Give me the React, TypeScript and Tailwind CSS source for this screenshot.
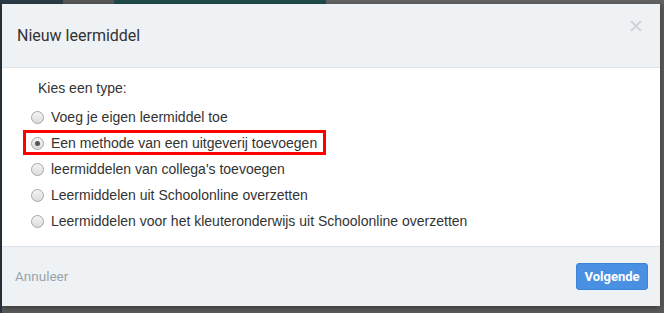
import { useState } from 'react';

const OPTIONS = [
  'Voeg je eigen leermiddel toe',
  'Een methode van een uitgeverij toevoegen',
  "leermiddelen van collega's toevoegen",
  'Leermiddelen uit Schoolonline overzetten',
  'Leermiddelen voor het kleuteronderwijs uit Schoolonline overzetten',
];

function Radio({ checked }: { checked: boolean }) {
  return (
    <span className="flex h-[13px] w-[13px] shrink-0 items-center justify-center rounded-full border border-[#a6a6a6] bg-gradient-to-b from-[#f4f4f4] to-[#dcdcdc]">
      {checked && <span className="h-[5px] w-[5px] rounded-full bg-[#555]" />}
    </span>
  );
}

export default function App() {
  const [selected, setSelected] = useState(1);

  return (
    <div className="relative h-[313px] w-[664px] overflow-hidden bg-[#5a5a5a] font-['Liberation_Sans',Arial,sans-serif]">
      {/* page behind the overlay */}
      <div className="flex h-[4px]">
        <div className="w-[63px] bg-[#2c3b46]" />
        <div className="w-[51px] bg-[#585858]" />
        <div className="w-[212px] bg-[#1f4a48]" />
        <div className="flex-1 bg-[#626262]" />
      </div>
      <div className="absolute bottom-0 left-0 top-0 w-[2px] bg-[#2a3640]" />

      {/* ── Modal ─────────────────────────────────────────────── */}
      <div className="absolute left-[2px] top-[4px] flex h-[302px] w-[658px] flex-col bg-white shadow-[0_2px_6px_rgba(0,0,0,0.35)]">
        <div className="flex h-[64px] items-center justify-between border-b border-[#dde3e9] bg-[#eef2f5] pl-[15px] pr-[18px]">
          <h2 className="font-['Roboto',sans-serif] text-[16px] text-[#333]">Nieuw leermiddel</h2>
          <button className="-mt-[20px] text-[#cfd3d6]" aria-label="Sluiten">
            <svg width="12" height="12" viewBox="0 0 12 12">
              <path d="M1 1L11 11M11 1L1 11" stroke="currentColor" strokeWidth="1.8" />
            </svg>
          </button>
        </div>

        <div className="flex-1 pl-[29px] pt-[12px]">
          <p className="pl-[7px] text-[14px] leading-[16px] text-[#333]">Kies een type:</p>
          <div className="mt-[8px] flex flex-col">
            {OPTIONS.map((label, i) => (
              <label
                key={label}
                onClick={() => setSelected(i)}
                className="relative flex h-[26px] cursor-pointer items-center gap-[7px] text-[14px] text-[#333]"
              >
                <Radio checked={selected === i} />
                <span>{label}</span>
                {i === 1 && (
                  <span className="pointer-events-none absolute -left-[8px] top-0 h-[25px] w-[303px] border-[3px] border-[#f00]" />
                )}
              </label>
            ))}
          </div>
        </div>

        <div className="flex h-[60px] items-center justify-between border-t border-[#dde3e9] bg-[#eef2f5] pl-[13px] pr-[12px]">
          <button className="font-['Roboto',sans-serif] text-[13.5px] text-[#99a3ad]">Annuleer</button>
          <button className="h-[27px] w-[72px] rounded-[3px] border border-[#3d84d6] bg-[#4a90e2] font-['Roboto',sans-serif] text-[13px] font-bold text-white">
            Volgende
          </button>
        </div>
      </div>
    </div>
  );
}
